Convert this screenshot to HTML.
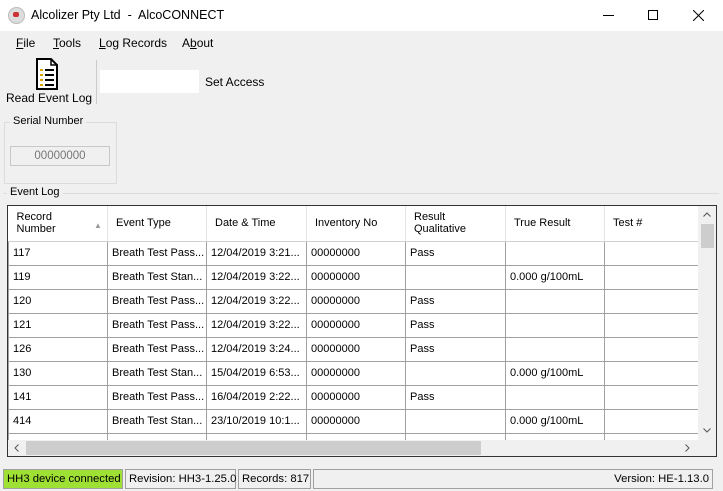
<!DOCTYPE html>
<html><head><style>
*{margin:0;padding:0;box-sizing:border-box}
body{width:723px;height:491px;background:#f0f0f0;font-family:"Liberation Sans",sans-serif;font-size:12px;color:#000;position:relative;overflow:hidden}
.a{position:absolute;white-space:nowrap}
.u{text-decoration:underline}
table{border-collapse:collapse;table-layout:fixed}
td{border:1px solid #a0a0a0;border-top:none;height:24px;padding:0 0 0 4px;overflow:hidden;white-space:nowrap;font-size:11px;border-bottom:1px solid #a0a0a0}
th{font-weight:normal;text-align:left;padding:0 0 0 8px;height:35px;border-right:1px solid #e5e5e5;border-bottom:1px solid #d0d0d0;font-size:11px;line-height:12px;background:#fff}
.st{position:absolute;top:469px;height:20px;border:1px solid #a0a0a0;padding:3px 3px;font-size:11.3px;white-space:nowrap}
</style></head><body>
<div class="a" style="left:0;top:0;width:723px;height:31px;background:#fff"></div>
<div class="a" style="left:8px;top:7px;width:17px;height:17px;border-radius:50%;background:#ddd;border:1px solid #bbb"></div>
<div class="a" style="left:13px;top:12px;width:6px;height:5px;background:#c33;border-radius:2px"></div>
<div class="a" style="left:31px;top:8px;font-size:12.5px">Alcolizer Pty Ltd&nbsp; -&nbsp; AlcoCONNECT</div>
<div class="a" style="left:603px;top:15px;width:11px;height:1px;background:#000"></div>
<div class="a" style="left:648px;top:10px;width:10px;height:10px;border:1px solid #000"></div>
<svg class="a" style="left:693px;top:10px" width="11" height="11"><path d="M0 0L11 11M11 0L0 11" stroke="#000" stroke-width="1"/></svg>
<div class="a" style="left:16px;top:36px"><span class="u">F</span>ile</div>
<div class="a" style="left:53px;top:36px"><span class="u">T</span>ools</div>
<div class="a" style="left:99px;top:36px"><span class="u">L</span>og Records</div>
<div class="a" style="left:182px;top:36px">A<span class="u">b</span>out</div>
<svg class="a" style="left:35px;top:58px" width="24" height="32" viewBox="0 0 24 32"><path d="M2 1h14l6 6v24H2z" fill="#fff" stroke="#000" stroke-width="2"/><path d="M16 1v6h6" fill="none" stroke="#000" stroke-width="1.5"/><g fill="#d9a400"><rect x="5" y="11" width="3" height="2"/><rect x="5" y="16" width="3" height="2"/><rect x="5" y="21" width="3" height="2"/><rect x="5" y="26" width="3" height="2"/></g><g fill="#000"><rect x="10" y="11" width="9" height="2"/><rect x="10" y="16" width="9" height="2"/><rect x="10" y="21" width="9" height="2"/><rect x="10" y="26" width="9" height="2"/></g></svg>
<div class="a" style="left:6px;top:91px;font-size:12px">Read Event Log</div>
<div class="a" style="left:96px;top:60px;width:1px;height:44px;background:#ccc"></div>
<div class="a" style="left:100px;top:70px;width:99px;height:23px;background:#fff"></div>
<div class="a" style="left:205px;top:75px">Set Access</div>
<div class="a" style="left:4px;top:122px;width:113px;height:62px;border:1px solid #dcdcdc"></div>
<div class="a" style="left:10px;top:115px;background:#f0f0f0;padding:0 3px;font-size:11px">Serial Number</div>
<div class="a" style="left:10px;top:146px;width:100px;height:20px;border:1px solid #c8c8c8;color:#777;text-align:center;line-height:18px;font-size:11.5px">00000000</div>
<div class="a" style="left:3px;top:193px;width:716px;height:1px;background:#dcdcdc"></div>
<div class="a" style="left:7px;top:186px;background:#f0f0f0;padding:0 3px;font-size:11px">Event Log</div>
<div class="a" style="left:7px;top:205px;width:710px;height:252px;border:1px solid #333;background:#fff;overflow:hidden">
<table style="width:690px">
<colgroup><col style="width:99px"><col style="width:99px"><col style="width:100px"><col style="width:99px"><col style="width:100px"><col style="width:99px"><col style="width:94px"></colgroup>
<tr><th>Record<br>Number<span style="position:absolute;left:86px;top:14px;color:#999;font-size:8px">▲</span></th><th>Event Type</th><th>Date &amp; Time</th><th>Inventory No</th><th>Result<br>Qualitative</th><th>True Result</th><th>Test #</th></tr>
<tr><td>117</td><td>Breath Test Pass...</td><td>12/04/2019 3:21...</td><td>00000000</td><td>Pass</td><td></td><td></td></tr>
<tr><td>119</td><td>Breath Test Stan...</td><td>12/04/2019 3:22...</td><td>00000000</td><td></td><td>0.000 g/100mL</td><td></td></tr>
<tr><td>120</td><td>Breath Test Pass...</td><td>12/04/2019 3:22...</td><td>00000000</td><td>Pass</td><td></td><td></td></tr>
<tr><td>121</td><td>Breath Test Pass...</td><td>12/04/2019 3:22...</td><td>00000000</td><td>Pass</td><td></td><td></td></tr>
<tr><td>126</td><td>Breath Test Pass...</td><td>12/04/2019 3:24...</td><td>00000000</td><td>Pass</td><td></td><td></td></tr>
<tr><td>130</td><td>Breath Test Stan...</td><td>15/04/2019 6:53...</td><td>00000000</td><td></td><td>0.000 g/100mL</td><td></td></tr>
<tr><td>141</td><td>Breath Test Pass...</td><td>16/04/2019 2:22...</td><td>00000000</td><td>Pass</td><td></td><td></td></tr>
<tr><td>414</td><td>Breath Test Stan...</td><td>23/10/2019 10:1...</td><td>00000000</td><td></td><td>0.000 g/100mL</td><td></td></tr>
<tr><td></td><td></td><td></td><td></td><td></td><td></td><td></td></tr>
</table>
<div class="a" style="left:690px;top:0;width:18px;height:234px;background:#f0f0f0"></div>
<div class="a" style="left:693px;top:18px;width:13px;height:24px;background:#cdcdcd"></div>
<svg class="a" style="left:695px;top:6px" width="8" height="5"><path d="M0.5 4.5L4 1L7.5 4.5" fill="none" stroke="#555"/></svg>
<svg class="a" style="left:695px;top:222px" width="8" height="5"><path d="M0.5 0.5L4 4L7.5 0.5" fill="none" stroke="#555"/></svg>
<div class="a" style="left:0;top:234px;width:708px;height:16px;background:#f0f0f0"></div>
<div class="a" style="left:18px;top:235px;width:455px;height:14px;background:#cdcdcd"></div>
<svg class="a" style="left:6px;top:238px" width="5" height="8"><path d="M4.5 0.5L1 4L4.5 7.5" fill="none" stroke="#555"/></svg>
<svg class="a" style="left:677px;top:238px" width="5" height="8"><path d="M0.5 0.5L4 4L0.5 7.5" fill="none" stroke="#555"/></svg>
</div>
<div class="st" style="left:3px;width:120px;background:#9fe035">HH3 device connected</div>
<div class="st" style="left:125px;width:111px">Revision: HH3-1.25.0</div>
<div class="st" style="left:238px;width:73px">Records: 817</div>
<div class="st" style="left:313px;width:400px;text-align:right">Version: HE-1.13.0</div>
</body></html>
